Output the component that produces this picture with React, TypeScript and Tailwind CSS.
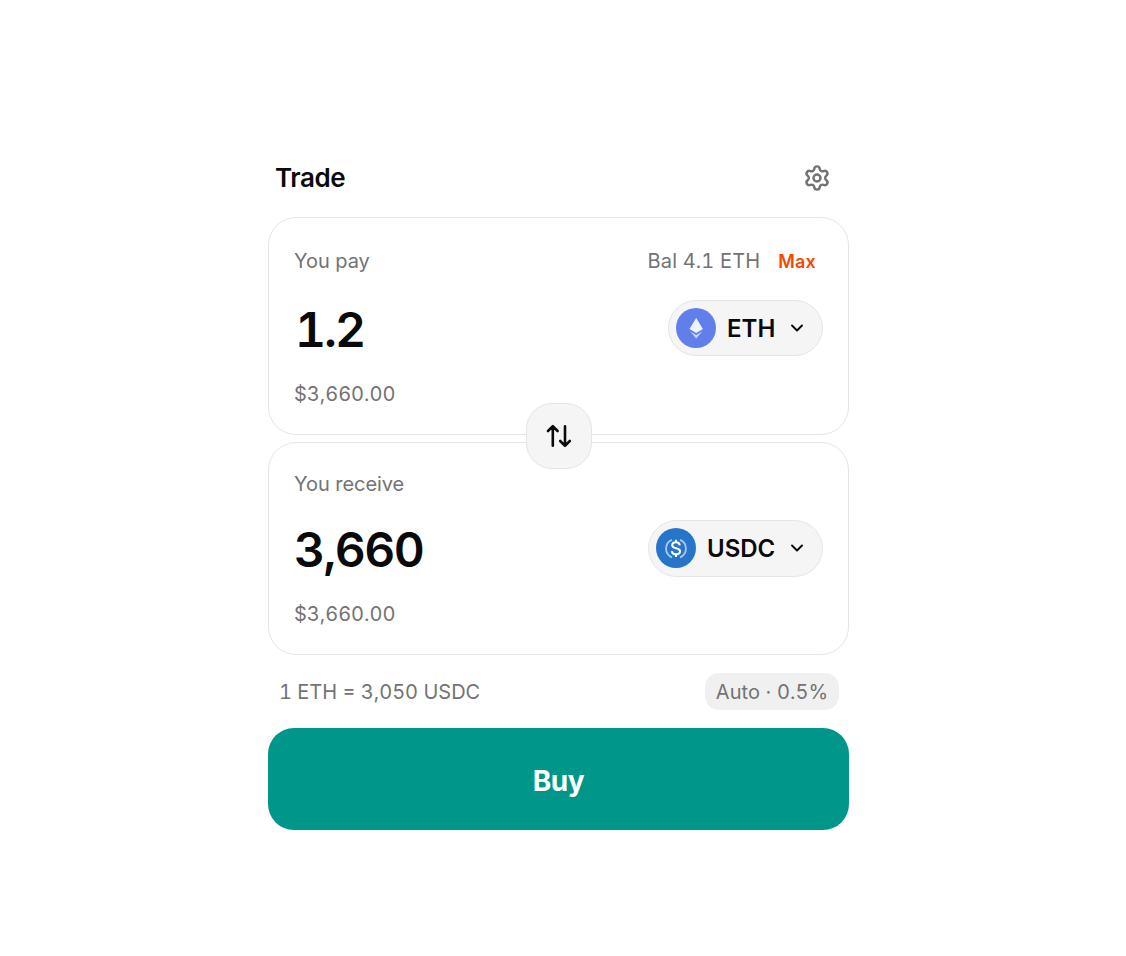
import React from 'react';
import { ChevronDown, Settings } from 'lucide-react';

function EthIcon() {
  return (
    <svg className="w-10 h-10" viewBox="0 0 40 40" fill="none">
      <circle cx="20" cy="20" r="20" fill="#627eea" />
      <path d="M20.200 10l6.700 11-6.700 3.900-6.700-3.900z" fill="#fff" fillOpacity=".9" />
      <path d="M14 23.200l6.200 3.700 6.200-3.700-6.200 7.300z" fill="#fff" fillOpacity=".65" />
    </svg>
  );
}

function UsdcIcon() {
  return (
    <svg className="w-10 h-10" viewBox="0 0 40 40" fill="none" stroke="#fff">
      <circle cx="20" cy="20" r="20" fill="#2775ca" stroke="none" />
      <path d="M16 11.800a9.500 9.500 0 0 0 0 17.600M24 11.800a9.500 9.500 0 0 1 0 17.600" strokeWidth="1.8" strokeOpacity=".6" />
      <path d="M23.800 17.400c-.2-2-1.600-3.100-3.800-3.100-2.200 0-3.800 1.200-3.800 3 0 4.100 7.800 1.900 7.800 5.900 0 1.900-1.500 3.100-4 3.100-2.400 0-4-1.200-4.100-3.200M20 11.800v2.500M20 26.300v2.600" strokeWidth="2" />
    </svg>
  );
}

interface TokenButtonProps {
  symbol: string;
  icon: React.ReactNode;
  className: string;
}

function TokenButton({ symbol, icon, className }: TokenButtonProps) {
  return (
    <button
      className={`flex items-start rounded-full border border-[#e5e5e5] bg-[#f5f5f5] pl-[7px] pr-[15px] pt-[7px] ${className}`}
    >
      {icon}
      <span className="ml-[11px] pt-px text-2xl leading-10 font-semibold">{symbol}</span>
      <ChevronDown className="ml-auto mt-[10px] w-5 h-5" strokeWidth={2.3} />
    </button>
  );
}

export default function App() {
  return (
    <div className="w-[1126px] h-[956px] bg-white pt-[155px] pl-[268px] font-['Inter',sans-serif] text-[#0a0a0a]">
      <div className="w-[581px]">
        <header className="flex h-[45px] items-center justify-between pl-[7px] pr-[18px]">
          <h1 className="text-[26px] font-semibold tracking-[-0.4px]">Trade</h1>
          <button className="text-[#737373]">
            <Settings className="w-7 h-7" strokeWidth={2.1} />
          </button>
        </header>

        <section className="mt-[17px] h-[218px] rounded-[28px] border border-[#e5e5e5] px-[25px] pt-[29px]">
          <div className="flex h-7 items-center justify-between pr-[7px] text-xl text-[#737373]">
            <span className="tracking-[-0.05px]">You pay</span>
            <div className="flex items-center gap-[18px]">
              <span className="tracking-[0.15px] tabular-nums">Bal 4.1 ETH</span>
              <button className="pt-px text-lg font-semibold tracking-[0.2px] text-[#f54900]">Max</button>
            </div>
          </div>
          <div className="mt-[25px] flex h-14 items-center justify-between">
            <span className="pl-px pt-[3px] text-5xl font-semibold tracking-[-2px] tabular-nums">1.2</span>
            <TokenButton symbol="ETH" icon={<EthIcon />} className="w-[155px] h-14" />
          </div>
          <div className="mt-6 h-7 text-xl leading-7 text-[#737373] tabular-nums">$3,660.00</div>
        </section>

        <div className="relative z-10 -mt-8 -mb-[27px] flex h-[66px] items-center justify-center">
          <button className="flex w-[66px] h-[66px] items-center justify-center rounded-[26px] border border-[#e5e5e5] bg-[#f5f5f5]">
            <svg className="w-[30px] h-[30px]" viewBox="0 0 30 30" fill="none" stroke="currentColor" strokeWidth="2.6" strokeLinecap="round" strokeLinejoin="round">
              <path d="M8.800 24.800V5.200M4 10l4.800-4.800L13.600 10M21 5.200v19.600M16.200 20l4.800 4.800 4.800-4.800" />
            </svg>
          </button>
        </div>

        <section className="h-[213px] rounded-[28px] border border-[#e5e5e5] px-[25px] pt-[27px]">
          <div className="h-7 text-xl leading-7 tracking-[-0.05px] text-[#737373]">You receive</div>
          <div className="mt-[22px] flex h-[57px] items-center justify-between">
            <span className="pt-[2px] text-5xl font-semibold tracking-[-1.600px] tabular-nums">3,660</span>
            <TokenButton symbol="USDC" icon={<UsdcIcon />} className="w-[175px] h-[57px]" />
          </div>
          <div className="mt-[23px] h-7 text-xl leading-7 text-[#737373] tabular-nums">$3,660.00</div>
        </section>

        <div className="mt-[18px] flex h-[37px] items-center justify-between pl-[11px] pr-[10px] text-xl text-[#737373] tabular-nums">
          <span>1 ETH = 3,050 USDC</span>
          <button className="h-[37px] w-[134px] rounded-[14px] bg-[#f0f0f0] tracking-[0.1px]">Auto · 0.5%</button>
        </div>

        <button className="mt-[18px] h-[102px] w-full rounded-[26px] bg-[#009689] pt-[3px] text-[28px] font-bold tracking-[-0.5px] text-white">
          Buy
        </button>
      </div>
    </div>
  );
}
